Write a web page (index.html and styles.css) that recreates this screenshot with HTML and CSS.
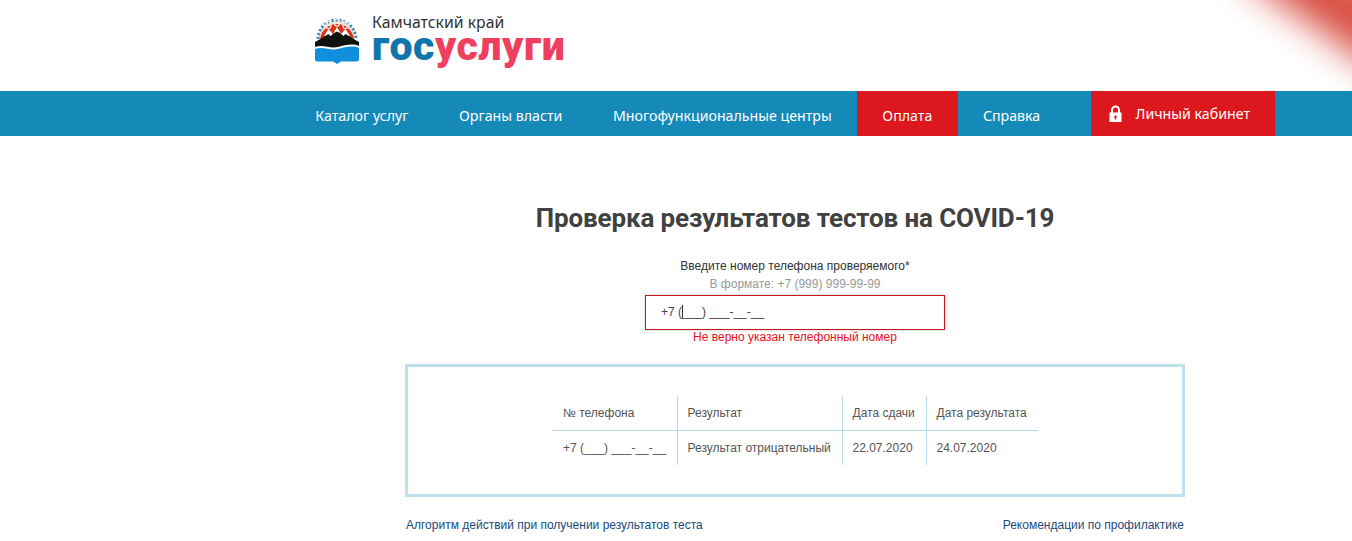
FILE: index.html
```html
<!DOCTYPE html>
<html lang="ru">
<head>
<meta charset="utf-8">
<title>Проверка результатов тестов на COVID-19</title>
<link rel="stylesheet" href="styles.css">
</head>
<body>
<div class="corner-clip"><div class="corner"></div></div>
<header class="top">
  <svg class="emblem" viewBox="0 0 44 52" width="44" height="52" aria-hidden="true">
    <path d="M3 27 A19 19 0 1 1 41 27" fill="#f3e3d8" stroke="#3b8db5" stroke-width="3" stroke-dasharray="2.200 1.800"/>
    <path d="M5 29 A17 17 0 1 1 39 29 Z" fill="#d8321c"/>
    <ellipse cx="13.500" cy="13" rx="2.600" ry="3.600" fill="none" stroke="#f6ece4" stroke-width="1.300"/>
    <ellipse cx="22" cy="10.500" rx="2.600" ry="3.600" fill="none" stroke="#f6ece4" stroke-width="1.300"/>
    <ellipse cx="30.500" cy="13" rx="2.600" ry="3.600" fill="none" stroke="#f6ece4" stroke-width="1.300"/>
    <path d="M9 24 L13.500 17 L18 22 L22 15 L26 22 L30.500 17 L35 24 Z" fill="#fff"/>
    <path d="M0 30 L7 26 L10 24 L13.500 22 L15.500 24 L19 21 L22 19.500 L25 21 L28.500 24 L30.500 22 L34 24 L37 26 L44 30 L44 34 C38 31 30 33 23 35 C15 37 8 32 0 35 Z" fill="#111"/>
    <path d="M0 37 C8 34 15 39 23 37 C30 35 38 33 44 36 L44 47 Q44 49.500 41.500 49.500 L26 49.500 L22 52 L18 49.500 L2.500 49.500 Q0 49.500 0 47 Z" fill="#0f8fdc"/>
  </svg>
  <div class="brand">
    <div class="region">Камчатский край</div>
    <div class="wordmark"><span class="gos">гос</span><span class="usl">услуги</span></div>
  </div>
</header>
<nav class="nav">
  <a class="nav-item">Каталог услуг</a>
  <a class="nav-item">Органы власти</a>
  <a class="nav-item">Многофункциональные центры</a>
  <a class="nav-item nav-red">Оплата</a>
  <a class="nav-item">Справка</a>
  <a class="nav-item nav-red nav-cabinet">
    <svg class="lock" viewBox="0 0 13 17" width="13" height="17" aria-hidden="true">
      <path d="M3 8 V5 a3.500 3.500 0 0 1 7 0 V8" fill="none" stroke="#fff" stroke-width="2"/>
      <path fill-rule="evenodd" d="M0.500 7.500 H12.500 V17 H0.500 Z M6.500 10.500 a1.300 1.300 0 0 0 -0.700 2.400 V14.500 H7.200 V12.900 a1.300 1.300 0 0 0 -0.700 -2.400 Z" fill="#fff"/>
    </svg>
    Личный кабинет
  </a>
</nav>
<main class="main">
  <h1 class="title">Проверка результатов тестов на COVID-19</h1>
  <div class="form">
    <div class="label">Введите номер телефона проверяемого*</div>
    <div class="hint">В формате: +7 (999) 999-99-99</div>
    <div class="input">+7 (<span class="caret"></span>___) ___-__-__</div>
    <div class="error">Не верно указан телефонный номер</div>
  </div>
  <section class="box">
    <table class="results">
      <colgroup><col class="c1"><col class="c2"><col class="c3"><col class="c4"></colgroup>
      <thead>
        <tr><th>№ телефона</th><th>Результат</th><th>Дата сдачи</th><th>Дата результата</th></tr>
      </thead>
      <tbody>
        <tr><td>+7 (___) ___-__-__</td><td>Результат отрицательный</td><td>22.07.2020</td><td>24.07.2020</td></tr>
      </tbody>
    </table>
  </section>
  <div class="links">
    <a class="link">Алгоритм действий при получении результатов теста</a>
    <a class="link">Рекомендации по профилактике</a>
  </div>
</main>
</body>
</html>
```
FILE: styles.css
```css
* { box-sizing: border-box; }
html, body { margin: 0; padding: 0; }
body {
  position: relative;
  height: 541px;
  overflow: hidden;
  background: #fff;
  font-family: "Liberation Sans", Arial, sans-serif;
  font-size: 12px;
  color: #444;
}
.corner-clip {
  position: absolute;
  top: 0;
  right: 0;
  width: 160px;
  height: 91px;
  overflow: hidden;
}
.corner {
  position: absolute;
  top: -33px;
  left: 53px;
  width: 180px;
  height: 66px;
  background: #d4392c;
  filter: blur(18px);
  opacity: .9;
  transform: rotate(35deg);
}
.top {
  position: relative;
  height: 91px;
  display: flex;
  padding: 12px 0 0 315px;
  gap: 13px;
}
.emblem { flex: none; }
.brand { margin-top: 1px; }
.region {
  font-family: "Noto Sans", sans-serif;
  font-size: 15.800px;
  line-height: 18px;
  color: #333;
}
.wordmark {
  font-family: Roboto, sans-serif;
  font-weight: 900;
  font-size: 41px;
  line-height: 30px;
  letter-spacing: .6px;
}
.gos { color: #0f76ab; }
.usl { color: #ee3f5f; }
.nav {
  position: relative;
  display: flex;
  height: 45px;
  padding: 0 77px 0 290px;
  background: #1589b8;
  font-family: "Noto Sans", sans-serif;
  font-size: 14.200px;
  color: #fff;
}
.nav-item {
  display: flex;
  align-items: center;
  padding: 3px 25.300px 0;
  white-space: nowrap;
}
.nav-red { background: #dc171d; }
.nav-cabinet { margin-left: auto; padding: 0 25px 0 18px; gap: 14px; }
.lock { flex: none; }
.main {
  width: 780px;
  margin-left: 405px;
}
.title {
  margin: 64px 0 0;
  text-align: center;
  font-family: Roboto, sans-serif;
  font-size: 26px;
  line-height: 36px;
  font-weight: 700;
  letter-spacing: -.13px;
  color: #414141;
}
.form {
  display: flex;
  flex-direction: column;
  align-items: center;
  margin-top: 21px;
}
.label { line-height: 18px; color: #333; }
.hint { line-height: 18px; color: #999; }
.input {
  width: 300px;
  height: 35px;
  margin-top: 2px;
  padding-left: 15px;
  border: 1px solid #c4161c;
  box-shadow: 0 0 3px rgba(120, 120, 120, .4);
  line-height: 33px;
  color: #444;
  white-space: pre;
}
.caret {
  display: inline-block;
  width: 1px;
  height: 14px;
  margin-right: -1px;
  background: #333;
  vertical-align: -3px;
}
.error { line-height: 14px; color: #e8101c; }
.box {
  display: flex;
  justify-content: center;
  align-items: flex-start;
  height: 133px;
  margin-top: 20px;
  padding-top: 29px;
  border: 3px solid #bfe0ec;
}
.results {
  table-layout: fixed;
  width: 486px;
  border-collapse: collapse;
}
.c1 { width: 125px; }
.c2 { width: 165px; }
.c3 { width: 84px; }
.c4 { width: 112px; }
.results th, .results td {
  padding: 0 10px;
  font-weight: 400;
  text-align: left;
  white-space: nowrap;
  border-left: 1px solid #b5d9e8;
  color: #555;
}
.results th:first-child, .results td:first-child { border-left: 0; padding-left: 11px; }
.results th { height: 34px; border-bottom: 1px solid #b5d9e8; }
.results td { height: 35px; }
.links {
  display: flex;
  justify-content: space-between;
  margin-top: 21px;
  padding: 0 1px;
  line-height: 15px;
  color: #1b4a7c;
}
```
